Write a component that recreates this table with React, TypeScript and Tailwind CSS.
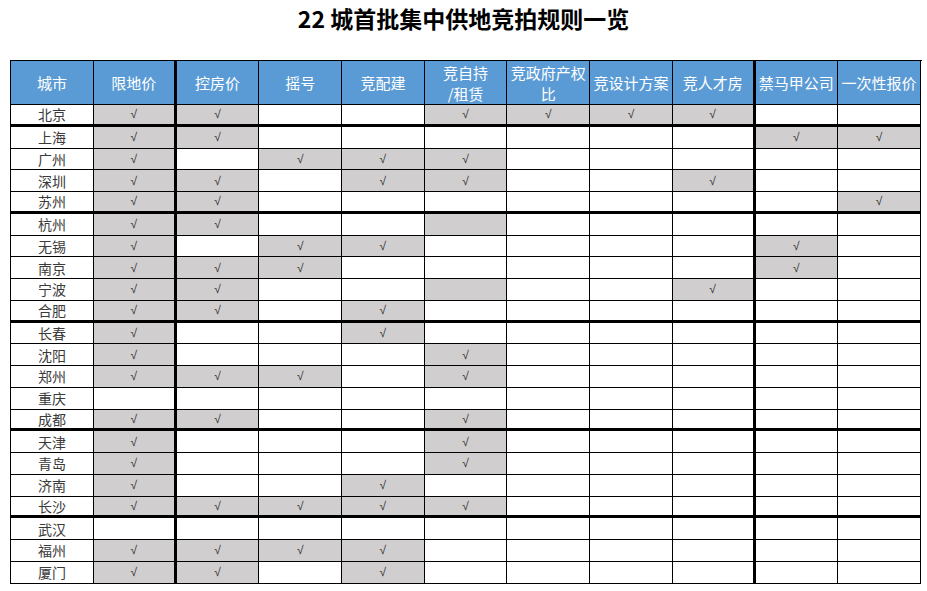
const headers = ['城市', '限地价', '控房价', '摇号', '竞配建', '竞自持\n/租赁', '竞政府产权比', '竞设计方案', '竞人才房', '禁马甲公司', '一次性报价']

// v = gray cell with check, g = gray cell without check, . = empty
const rows: [string, string][] = [
  ['北京', 'vv..vvvv..'],
  ['上海', 'vv......vv'],
  ['广州', 'v.vvv.....'],
  ['深圳', 'vv.vv..v..'],
  ['苏州', 'vv.......v'],
  ['杭州', 'vv..g.....'],
  ['无锡', 'v.vv....v.'],
  ['南京', 'vvv.....v.'],
  ['宁波', 'vv..g..v..'],
  ['合肥', 'vv.v......'],
  ['长春', 'v..v......'],
  ['沈阳', 'v...v.....'],
  ['郑州', 'vvv.v.....'],
  ['重庆', '..........'],
  ['成都', 'vv..v.....'],
  ['天津', 'v...v.....'],
  ['青岛', 'v...v.....'],
  ['济南', 'v..v......'],
  ['长沙', 'vvvvv.....'],
  ['武汉', '..........'],
  ['福州', 'vvvv......'],
  ['厦门', 'vv.v......'],
]

const thickRows = [0, 4, 9, 14, 18]
const thickCols = [1, 8]

const font = { fontFamily: '"Noto Sans CJK SC", "Noto Sans", sans-serif' }

function App() {
  return (
    <main className="h-[591px] w-[927px] overflow-hidden bg-white" style={font}>
      <h1 className="pt-[5px] text-center text-[23px] font-bold leading-[26px] text-black">22 城首批集中供地竞拍规则一览</h1>
      <div className="ml-[10px] mt-[29px] grid w-[912px] grid-cols-[83px_repeat(10,82.7px)] grid-rows-[44px_repeat(22,21.76px)] border-l border-t border-black">
        {headers.map((title, col) => (
          <div
            key={title}
            className={`flex items-center justify-center whitespace-pre-line border-b border-black bg-[#5b9bd5] px-[1px] text-center text-[15px] leading-[21px] text-white ${
              thickCols.includes(col) ? 'border-r-[3px]' : 'border-r'
            }`}
          >
            {title}
          </div>
        ))}
        {rows.map(([city, marks], rowIndex) => {
          const rowBorder = thickRows.includes(rowIndex) ? 'border-b-[3px]' : 'border-b'
          return [
            <div
              key={city}
              className={`flex items-center justify-center border-r border-black text-[14px] leading-none text-[#3a3a3a] ${rowBorder}`}
            >
              {city}
            </div>,
            ...marks.split('').map((mark, i) => (
              <div
                key={`${city}-${i}`}
                className={`flex items-center justify-center border-black font-['Liberation_Sans',sans-serif] text-[12px] leading-none text-[#333] ${rowBorder} ${
                  thickCols.includes(i + 1) ? 'border-r-[3px]' : 'border-r'
                } ${mark === '.' ? 'bg-white' : 'bg-[#d0cece]'}`}
              >
                {mark === 'v' ? '√' : ''}
              </div>
            )),
          ]
        })}
      </div>
    </main>
  )
}

export default App
